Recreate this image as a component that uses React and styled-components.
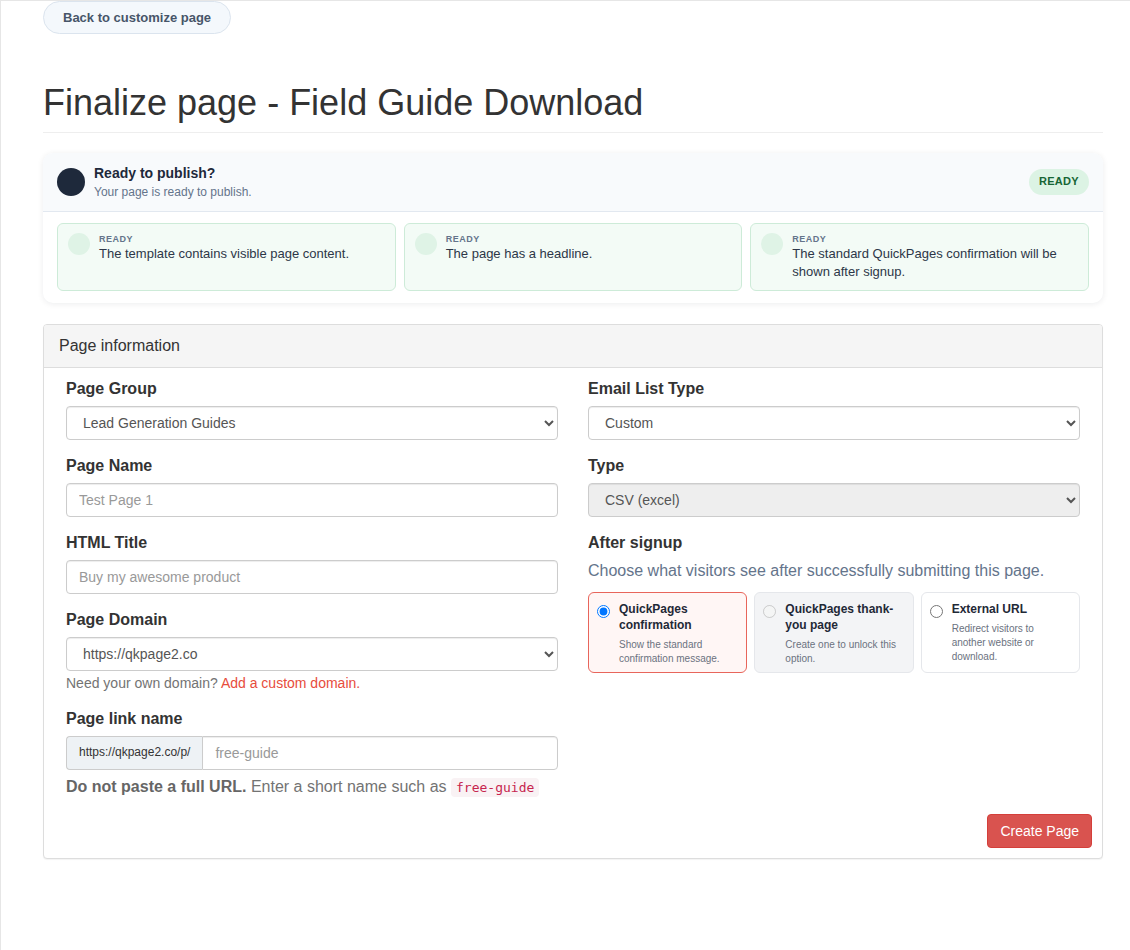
import React from "react";
import styled, { createGlobalStyle } from "styled-components";

const GlobalStyle = createGlobalStyle`
  html, body { margin: 0; padding: 0; background: #fff; }
  body {
    font-family: "Liberation Sans", Arial, Helvetica, sans-serif;
    color: #333;
    font-size: 14px;
    line-height: 1.42857;
  }
  * { box-sizing: border-box; }
`;

const Page = styled.div`
  min-height: 100vh;
  border-top: 1px solid #e6e6e6;
  border-left: 1px solid #e6e6e6;
  padding: 0 0 40px 42px;
`;

const Container = styled.div`
  width: 1060px;
`;

const BackButton = styled.button`
  height: 33px;
  padding: 0 19px;
  border: 1px solid #dbe4ee;
  border-radius: 999px;
  background: #f4f8fc;
  color: #475569;
  font-family: inherit;
  font-size: 13px;
  font-weight: 700;
  cursor: pointer;
`;

const Header = styled.div`
  margin-top: 49px;
  padding-bottom: 9px;
  border-bottom: 1px solid #eee;
`;

const Title = styled.h1`
  margin: 0;
  font-size: 36px;
  font-weight: 400;
  line-height: 1.1;
  color: #333;
`;

const ReadyCard = styled.div`
  margin-top: 20px;
  background: #fff;
  border-radius: 10px;
  box-shadow: 0 1px 6px rgba(15, 23, 42, 0.08);
  overflow: hidden;
`;

const ReadyHead = styled.div`
  display: flex;
  align-items: center;
  gap: 9px;
  padding: 11px 14px;
  background: #f8fafc;
  border-bottom: 1px solid #e2e8f0;
`;

const StatusDot = styled.span`
  width: 28px;
  height: 28px;
  border-radius: 50%;
  background: #1e293b;
  flex-shrink: 0;
`;

const HeadText = styled.div`
  flex: 1;
  display: flex;
  flex-direction: column;
`;

const HeadTitle = styled.div`
  font-size: 14px;
  line-height: 18px;
  font-weight: 700;
  color: #1e293b;
`;

const HeadSub = styled.div`
  font-size: 12px;
  line-height: 16px;
  margin-top: 2px;
  color: #64748b;
`;

const Badge = styled.span`
  display: inline-flex;
  align-items: center;
  height: 26px;
  padding: 0 10px;
  border-radius: 13px;
  background: #dcf3e4;
  color: #166534;
  font-size: 11px;
  font-weight: 700;
  letter-spacing: 0.3px;
`;

const CheckGrid = styled.div`
  display: grid;
  grid-template-columns: repeat(3, 1fr);
  gap: 8px;
  padding: 11px 14px 12px;
`;

const CheckItem = styled.div`
  display: flex;
  align-items: flex-start;
  gap: 9px;
  padding: 9px 10px 9px;
  border: 1px solid #cdebd8;
  border-radius: 6px;
  background: #f3fbf6;
`;

const CheckDot = styled.span`
  width: 22px;
  height: 22px;
  border-radius: 50%;
  background: #dff3e6;
  flex-shrink: 0;
`;

const CheckBody = styled.div`
  display: flex;
  flex-direction: column;
`;

const CheckLabel = styled.span`
  font-size: 9px;
  line-height: 12px;
  font-weight: 700;
  letter-spacing: 0.5px;
  color: #64748b;
`;

const CheckText = styled.span`
  font-size: 13px;
  line-height: 18px;
  color: #2d3748;
`;

const Panel = styled.div`
  margin-top: 21px;
  border: 1px solid #ddd;
  border-radius: 4px;
  background: #fff;
  box-shadow: 0 1px 1px rgba(0, 0, 0, 0.05);
`;

const PanelHeading = styled.div`
  padding: 10px 15px;
  background: #f5f5f5;
  border-bottom: 1px solid #ddd;
  border-radius: 3px 3px 0 0;
  font-size: 16px;
  line-height: 22px;
  color: #333;
`;

const PanelBody = styled.div`
  padding: 10px 22px 0;
`;

const Columns = styled.div`
  display: grid;
  grid-template-columns: 1fr 1fr;
  gap: 30px;
`;

const Column = styled.div`
  display: flex;
  flex-direction: column;
`;

const Group = styled.div`
  margin-bottom: ${(p) => p.$gap ?? 15}px;
`;

const Label = styled.label`
  display: block;
  margin-bottom: 6px;
  font-size: 16px;
  line-height: 22px;
  font-weight: 700;
  color: #333;
`;

const controlBase = `
  display: block;
  width: 100%;
  height: 34px;
  padding: 6px 12px;
  font-family: "Liberation Sans", Arial, Helvetica, sans-serif;
  font-size: 14px;
  line-height: 20px;
  color: #555;
  background: #fff;
  border: 1px solid #ccc;
  border-radius: 4px;
  box-shadow: inset 0 1px 1px rgba(0, 0, 0, 0.075);
  outline: none;
  &::placeholder { color: #999; }
`;

const Select = styled.select`
  ${controlBase}
  &:disabled {
    background: #eee;
    opacity: 1;
    color: #555;
  }
`;

const Input = styled.input`
  ${controlBase}
`;

const InputGroup = styled.div`
  display: flex;
  width: 100%;
`;

const Addon = styled.span`
  display: inline-flex;
  align-items: center;
  height: 34px;
  padding: 0 12px;
  font-size: 12px;
  color: #333;
  background: #eef2f5;
  border: 1px solid #ccc;
  border-right: 0;
  border-radius: 4px 0 0 4px;
  white-space: nowrap;
`;

const GroupInput = styled.input`
  ${controlBase}
  flex: 1;
  border-radius: 0 4px 4px 0;
`;

const Help = styled.p`
  margin: 2px 0 0;
  font-size: 14px;
  line-height: 20px;
  color: #737373;
`;

const HelpLink = styled.a`
  color: #e74c3c;
  text-decoration: none;
`;

const LinkHelp = styled.p`
  margin: 6px 0 0;
  font-size: 16px;
  line-height: 22px;
  color: #737373;
  strong { color: #666; }
`;

const Code = styled.code`
  padding: 2px 5px;
  font-family: "DejaVu Sans Mono", "Liberation Mono", monospace;
  font-size: 13px;
  color: #c7254e;
  background: #f9f2f4;
  border-radius: 4px;
`;

const Lead = styled.p`
  margin: 2px 0 0;
  font-size: 16px;
  line-height: 22px;
  color: #64748b;
`;

const OptionGrid = styled.div`
  display: grid;
  grid-template-columns: repeat(3, 1fr);
  gap: 7px;
  margin-top: 10px;
`;

const OptionCard = styled.label`
  display: flex;
  align-items: flex-start;
  gap: 9px;
  padding: 8px 14px 6px 8px;
  border: 1px solid ${(p) => (p.$active ? "#e8655b" : "#e5e7eb")};
  border-radius: 6px;
  background: ${(p) => (p.$active ? "#fff6f5" : p.$disabled ? "#f3f4f6" : "#fff")};
  cursor: ${(p) => (p.$disabled ? "default" : "pointer")};
`;

const Radio = styled.input`
  width: 13px;
  height: 13px;
  margin: 4px 0 0;
  flex-shrink: 0;
`;

const OptionBody = styled.div`
  display: flex;
  flex-direction: column;
`;

const OptionTitle = styled.span`
  font-size: 12px;
  line-height: 16px;
  font-weight: 700;
  color: #1f2937;
`;

const OptionDesc = styled.span`
  margin-top: 5px;
  font-size: 10px;
  line-height: 14px;
  color: #6b7280;
`;

const Footer = styled.div`
  display: flex;
  justify-content: flex-end;
  padding: 15px 10px 10px;
`;

const DangerButton = styled.button`
  height: 34px;
  padding: 6px 12px;
  font-family: inherit;
  font-size: 14px;
  line-height: 20px;
  color: #fff;
  background: #d9534f;
  border: 1px solid #d43f3a;
  border-radius: 4px;
  cursor: pointer;
`;

const checks = [
  "The template contains visible page content.",
  "The page has a headline.",
  "The standard QuickPages confirmation will be shown after signup.",
];

const options = [
  { title: "QuickPages confirmation", desc: "Show the standard confirmation message.", active: true },
  { title: "QuickPages thank-you page", desc: "Create one to unlock this option.", disabled: true },
  { title: "External URL", desc: "Redirect visitors to another website or download." },
];

export default function App() {
  return (
    <>
      <GlobalStyle />
      <Page>
        <Container>
          <BackButton type="button">Back to customize page</BackButton>
          <Header>
            <Title>Finalize page - Field Guide Download</Title>
          </Header>

          <ReadyCard>
            <ReadyHead>
              <StatusDot />
              <HeadText>
                <HeadTitle>Ready to publish?</HeadTitle>
                <HeadSub>Your page is ready to publish.</HeadSub>
              </HeadText>
              <Badge>READY</Badge>
            </ReadyHead>
            <CheckGrid>
              {checks.map((c) => (
                <CheckItem key={c}>
                  <CheckDot />
                  <CheckBody>
                    <CheckLabel>READY</CheckLabel>
                    <CheckText>{c}</CheckText>
                  </CheckBody>
                </CheckItem>
              ))}
            </CheckGrid>
          </ReadyCard>

          <Panel>
            <PanelHeading>Page information</PanelHeading>
            <PanelBody>
              <Columns>
                <Column>
                  <Group>
                    <Label>Page Group</Label>
                    <Select defaultValue="lead">
                      <option value="lead">Lead Generation Guides</option>
                    </Select>
                  </Group>
                  <Group>
                    <Label>Page Name</Label>
                    <Input placeholder="Test Page 1" />
                  </Group>
                  <Group>
                    <Label>HTML Title</Label>
                    <Input placeholder="Buy my awesome product" />
                  </Group>
                  <Group>
                    <Label>Page Domain</Label>
                    <Select defaultValue="qk">
                      <option value="qk">https://qkpage2.co</option>
                    </Select>
                    <Help>
                      Need your own domain? <HelpLink href="#">Add a custom domain.</HelpLink>
                    </Help>
                  </Group>
                  <Group $gap={0}>
                    <Label>Page link name</Label>
                    <InputGroup>
                      <Addon>https://qkpage2.co/p/</Addon>
                      <GroupInput placeholder="free-guide" />
                    </InputGroup>
                    <LinkHelp>
                      <strong>Do not paste a full URL.</strong> Enter a short name such as{" "}
                      <Code>free-guide</Code>
                    </LinkHelp>
                  </Group>
                </Column>

                <Column>
                  <Group>
                    <Label>Email List Type</Label>
                    <Select defaultValue="custom">
                      <option value="custom">Custom</option>
                    </Select>
                  </Group>
                  <Group>
                    <Label>Type</Label>
                    <Select defaultValue="csv" disabled>
                      <option value="csv">CSV (excel)</option>
                    </Select>
                  </Group>
                  <Group $gap={0}>
                    <Label>After signup</Label>
                    <Lead>Choose what visitors see after successfully submitting this page.</Lead>
                    <OptionGrid>
                      {options.map((o) => (
                        <OptionCard key={o.title} $active={o.active} $disabled={o.disabled}>
                          <Radio
                            type="radio"
                            name="after"
                            defaultChecked={o.active}
                            disabled={o.disabled}
                          />
                          <OptionBody>
                            <OptionTitle>{o.title}</OptionTitle>
                            <OptionDesc>{o.desc}</OptionDesc>
                          </OptionBody>
                        </OptionCard>
                      ))}
                    </OptionGrid>
                  </Group>
                </Column>
              </Columns>
            </PanelBody>
            <Footer>
              <DangerButton type="button">Create Page</DangerButton>
            </Footer>
          </Panel>
        </Container>
      </Page>
    </>
  );
}
